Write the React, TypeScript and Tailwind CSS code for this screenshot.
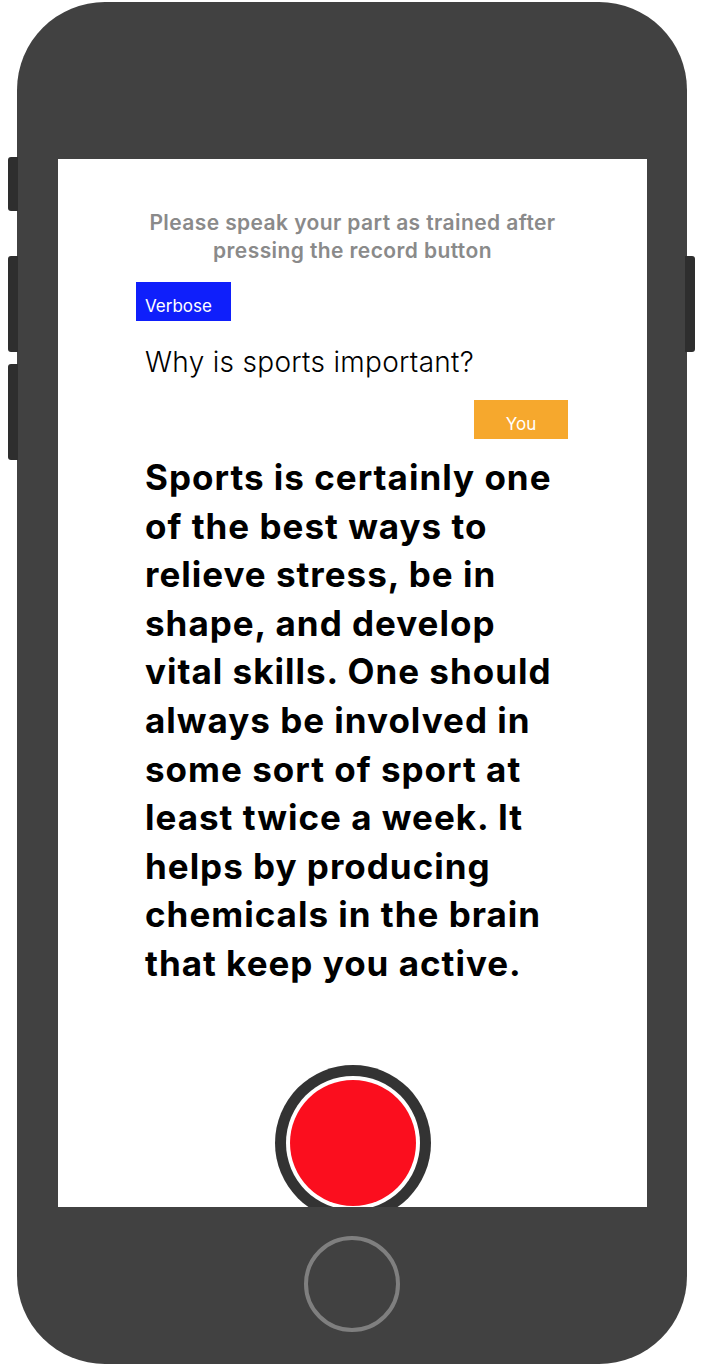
export default function App() {
  return (
    <div className="w-[704px] h-[1366px] bg-white pt-[2px] pl-[17px] font-['Inter',sans-serif]">
      <div className="relative w-[670px] h-[1362px] rounded-[88px] bg-[#414141] flex flex-col items-center">
        {/* side buttons */}
        <div className="absolute left-[-9px] top-[155px] w-[10px] h-[54px] rounded-l-[3px] bg-[#2e2e2e]" />
        <div className="absolute left-[-9px] top-[254px] w-[10px] h-[96px] rounded-l-[3px] bg-[#2e2e2e]" />
        <div className="absolute left-[-9px] top-[362px] w-[10px] h-[96px] rounded-l-[3px] bg-[#2e2e2e]" />
        <div className="absolute right-[-8px] top-[254px] w-[10px] h-[96px] rounded-r-[3px] bg-[#2e2e2e]" />

        <div className="mt-[157px] ml-[1px] w-[589px] h-[1048px] bg-white overflow-hidden flex flex-col">
          <p className="mt-[50px] text-center text-[21px] leading-[28px] font-semibold tracking-[0.4px] text-[#8a8a8a]">
            Please speak your part as trained after
            <br />
            pressing the record button
          </p>

          <div className="mt-[17px] ml-[78px] w-[95px] h-[39px] bg-[#0f1ffb] pt-[14px] pl-[9px] text-[17px] leading-[20px] text-white">
            Verbose
          </div>

          <p className="mt-[22px] ml-[87px] text-[28px] leading-[38px] font-light tracking-[0.3px] text-black">
            Why is sports important?
          </p>

          <div className="mt-[19px] ml-[416px] w-[94px] h-[39px] bg-[#f6a82d] pt-[14px] text-center text-[17px] leading-[20px] text-white">
            You
          </div>

          <p className="mt-[14px] ml-[87px] w-[422px] text-[35px] leading-[48.6px] font-bold text-black tracking-[1px]">
            Sports is certainly one of the best ways to relieve stress, be in
            shape, and develop vital skills. One should always be involved in
            some sort of sport at least twice a week. It helps by producing
            chemicals in the brain that keep you active.
          </p>

          <div className="mt-auto mb-[-14px] self-center w-[156px] h-[156px] shrink-0 rounded-full bg-[#333333] p-[11px]">
            <div className="w-full h-full rounded-full bg-white p-[4px]">
              <div className="w-full h-full rounded-full bg-[#fb0e1e]" />
            </div>
          </div>
        </div>

        <div className="mt-[29px] w-[96px] h-[96px] rounded-full border-[4px] border-[#7f7f7f]" />
      </div>
    </div>
  )
}
